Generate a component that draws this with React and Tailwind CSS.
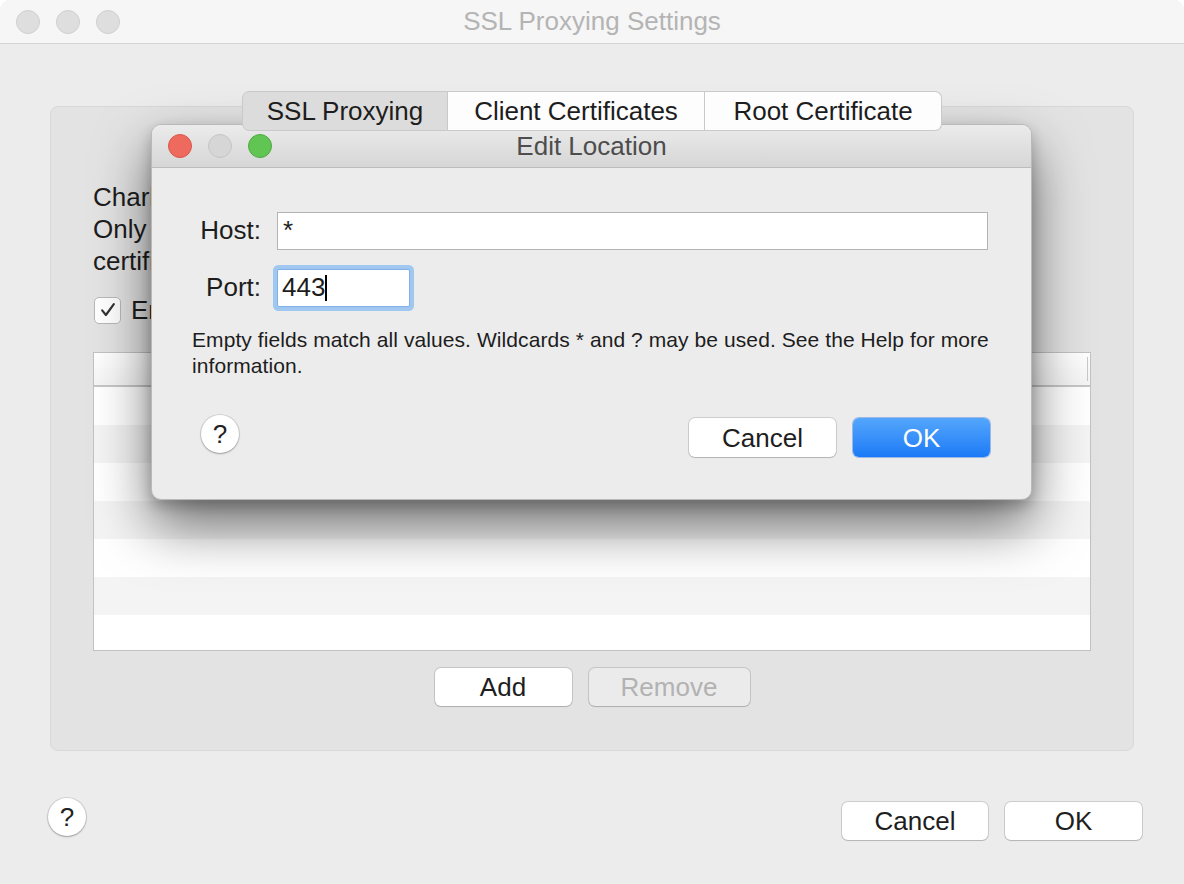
import React from 'react';

const Light = ({ color }) => {
    const styles = {
        red: 'bg-[#ee6a5f] border-[#d9574c]',
        gray: 'bg-[#d6d6d6] border-[#c4c4c4]',
        green: 'bg-[#61c554] border-[#4fa942]',
        idle: 'bg-[#dedede] border-[#cfcfcf]',
    };
    return <div className={`w-[24px] h-[24px] rounded-full border ${styles[color]}`} />;
};

const MacButton = ({ children, className = '', disabled = false }) => (
    <button
        className={`h-[38px] rounded-[6px] text-[26px] leading-none flex items-center justify-center shadow-[0_0_0_1px_rgba(0,0,0,0.13),0_1px_1px_rgba(0,0,0,0.12)] ${disabled ? 'bg-[#ebebeb] text-[#b2b2b2]' : 'bg-white text-[#1e1e1e]'} ${className}`}
    >
        {children}
    </button>
);

const HelpButton = ({ className = '' }) => (
    <div className={`w-[38px] h-[38px] rounded-full bg-white flex items-center justify-center text-[26px] text-[#222] shadow-[0_0_0_1px_rgba(0,0,0,0.1),0_1px_2px_rgba(0,0,0,0.25)] ${className}`}>
        ?
    </div>
);

export default function App() {
    const rows = [0, 1, 2, 3, 4, 5, 6];

    return (
        <div className="relative w-[1184px] h-[884px] overflow-hidden bg-[#ececec] rounded-t-[10px] font-['Liberation_Sans',Arial,sans-serif] text-[#1d1d1d]">
            {/* main window title bar */}
            <div className="h-[44px] grid grid-cols-[1fr_auto_1fr] items-center bg-[#f6f6f6] border-b border-[#d3d3d3]">
                <div className="flex gap-[16px] pl-[16px]">
                    <Light color="idle" />
                    <Light color="idle" />
                    <Light color="idle" />
                </div>
                <div className="text-[26px] text-[#b4b4b4]">SSL Proxying Settings</div>
                <div />
            </div>

            <div className="px-[50px] pt-[47px]">
                {/* tabs */}
                <div className="relative z-10 flex justify-center h-[40px]">
                    <div className="w-[206px] rounded-l-[7px] bg-[#dcdcdc] border border-[#c9c9c9] flex items-center justify-center text-[26px]">SSL Proxying</div>
                    <div className="w-[257px] bg-[#fdfdfd] border-y border-r border-[#c9c9c9] flex items-center justify-center text-[26px]">Client Certificates</div>
                    <div className="w-[237px] rounded-r-[7px] bg-[#fdfdfd] border-y border-r border-[#c9c9c9] flex items-center justify-center text-[26px]">Root Certificate</div>
                </div>

                {/* tab panel */}
                <div className="-mt-[25px] h-[645px] rounded-[8px] bg-[#e3e3e3] border border-[#d8d8d8] px-[42px] pt-[74px] flex flex-col">
                    <div className="text-[26px] leading-[32px] whitespace-nowrap">
                        <div>Charles can show you the plain text contents of SSL requests and responses.</div>
                        <div>Only the locations listed below will be proxied. Charles will issue and sign SSL</div>
                        <div>certificates, please press the Help button for more information.</div>
                    </div>

                    <div className="mt-[19px] h-[28px] flex items-center gap-[10px] ml-[1px]">
                        <div className="w-[27px] h-[27px] rounded-[5px] bg-white border border-[#b8b8b8] flex items-center justify-center">
                            <svg viewBox="0 0 24 24" className="w-[20px] h-[20px]" fill="none" stroke="#333" strokeWidth="2.6" strokeLinecap="round" strokeLinejoin="round">
                                <path d="M5 12.5l4.5 5.5L19 5" />
                            </svg>
                        </div>
                        <span className="text-[26px]">Enable SSL Proxying</span>
                    </div>

                    {/* locations table */}
                    <div className="mt-[28px] h-[299px] bg-white border border-[#c2c2c2] flex flex-col overflow-hidden">
                        <div className="h-[34px] shrink-0 border-b-2 border-[#c6c6c6] bg-gradient-to-b from-white to-[#f4f4f4] flex items-center justify-end pr-[2px]">
                            <div className="w-[1px] h-[24px] bg-[#c8c8c8]" />
                        </div>
                        {rows.map((r) => (
                            <div key={r} className={`h-[38px] shrink-0 ${r % 2 === 0 ? 'bg-white' : 'bg-[#f4f4f4]'}`} />
                        ))}
                    </div>

                    <div className="mt-[17px] flex justify-center gap-[17px]">
                        <MacButton className="w-[137px]">Add</MacButton>
                        <MacButton className="w-[161px]" disabled>Remove</MacButton>
                    </div>
                </div>
            </div>

            {/* bottom bar */}
            <div className="mt-[51px] pl-[48px] pr-[42px] flex items-start">
                <HelpButton className="-mt-[4px]" />
                <div className="flex-1" />
                <div className="flex gap-[17px]">
                    <MacButton className="w-[146px]">Cancel</MacButton>
                    <MacButton className="w-[137px]">OK</MacButton>
                </div>
            </div>

            {/* Edit Location sheet */}
            <div className="absolute left-[151px] top-[124px] w-[881px] h-[376px] rounded-[10px] overflow-hidden bg-[#ececec] border border-[#b9b9b9] shadow-[0_26px_55px_rgba(0,0,0,0.55),0_6px_14px_rgba(0,0,0,0.22)] flex flex-col">
                <div className="h-[43px] shrink-0 grid grid-cols-[1fr_auto_1fr] items-center bg-gradient-to-b from-[#ebebeb] to-[#d6d6d6] border-b border-[#bdbdbd]">
                    <div className="flex gap-[16px] pl-[16px]">
                        <Light color="red" />
                        <Light color="gray" />
                        <Light color="green" />
                    </div>
                    <div className="text-[26px] text-[#4d4d4d]">Edit Location</div>
                    <div />
                </div>

                <div className="pt-[43px] pl-[40px] pr-[43px] flex flex-col">
                    <div className="grid grid-cols-[69px_1fr] gap-x-[16px] gap-y-[18px] items-center">
                        <div className="text-right text-[26px]">Host:</div>
                        <div className="h-[38px] bg-white border border-[#b4b4b4] px-[5px] flex items-center text-[26px]">*</div>
                        <div className="text-right text-[26px]">Port:</div>
                        <div className="w-[133px] h-[38px] bg-white border border-[#7fb0e6] rounded-[2px] shadow-[0_0_0_4px_#9fc7f0] px-[4px] flex items-center text-[26px]">
                            443<span className="w-[2px] h-[26px] bg-black" />
                        </div>
                    </div>

                    <div className="mt-[20px] text-[21px] tracking-[0.08px] leading-[26px] whitespace-nowrap">
                        <div>Empty fields match all values. Wildcards * and ? may be used. See the Help for more</div>
                        <div>information.</div>
                    </div>

                    <div className="mt-[39px] -mr-[2px] flex items-start">
                        <HelpButton className="ml-[9px] -mt-[3px]" />
                        <div className="flex-1" />
                        <MacButton className="w-[147px] h-[39px]">Cancel</MacButton>
                        <button className="ml-[17px] w-[137px] h-[39px] rounded-[6px] bg-gradient-to-b from-[#54a6fc] to-[#1a7af6] text-white text-[26px] leading-none flex items-center justify-center shadow-[0_0_0_1px_rgba(10,90,220,0.35)]">
                            OK
                        </button>
                    </div>
                </div>
            </div>
        </div>
    );
}
